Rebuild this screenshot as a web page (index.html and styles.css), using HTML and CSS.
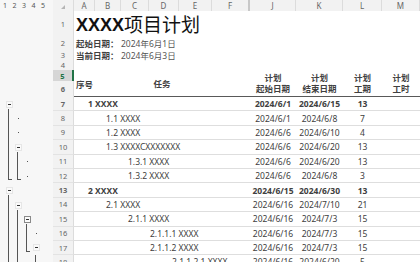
FILE: index.html
```html
<!DOCTYPE html>
<html lang="zh-CN">
<head>
    <meta charset="UTF-8">
    <title>XXXX项目计划</title>
    <link rel="stylesheet" href="styles.css">
</head>
<body>
    <div class="sheet">
        <!-- column letters -->
        <div class="row colhead">
            <div class="levels"><span>1</span><span>2</span><span>3</span><span>4</span><span>5</span></div>
            <div class="corner"><i class="tri"></i></div>
            <div>A</div><div>B</div><div>C</div><div>D</div><div>E</div>
            <div class="hidden-mark">F</div><div>J</div><div>K</div><div>L</div><div>M</div>
        </div>

        <div class="row r1">
            <div class="outline"></div>
            <div class="rh">1</div>
            <div class="title"><b>XXXX</b>项目计划</div>
        </div>
        <div class="row r2">
            <div class="outline"></div>
            <div class="rh">2</div>
            <div class="label">起始日期：</div>
            <div class="value">2024年6月1日</div>
        </div>
        <div class="row r3">
            <div class="outline"></div>
            <div class="rh">3</div>
            <div class="label">当前日期：</div>
            <div class="value">2024年6月3日</div>
        </div>
        <div class="row r4">
            <div class="outline"></div>
            <div class="rh">4</div>
        </div>

        <!-- rows 5-6: merged header -->
        <div class="row head">
            <div class="outline"></div>
            <div class="rh two"><span class="sel">5</span><span>6</span></div>
            <div class="h-task">任务</div>
            <div class="h-no">序号</div>
            <div class="h hj">计划<br>起始日期</div>
            <div class="h hk">计划<br>结束日期</div>
            <div class="h hl">计划<br>工期</div>
            <div class="h hm">计划<br>工时</div>
        </div>

        <div class="row data bold">
            <div class="outline"><span class="s start"><i class="btn"></i><i class="ln"></i></span></div>
            <div class="rh">7</div>
            <div class="task lv1">1 XXXX</div>
            <div class="c">2024/6/1</div><div class="c">2024/6/15</div><div class="c">13</div><div class="c"></div>
        </div>
        <div class="row data">
            <div class="outline"><span class="s"><i class="ln"></i></span><span class="s"><i class="dot"></i></span></div>
            <div class="rh">8</div>
            <div class="task lv2">1.1 XXXX</div>
            <div class="c">2024/6/1</div><div class="c">2024/6/8</div><div class="c">7</div><div class="c"></div>
        </div>
        <div class="row data">
            <div class="outline"><span class="s"><i class="ln"></i></span><span class="s"><i class="dot"></i></span></div>
            <div class="rh">9</div>
            <div class="task lv2">1.2 XXXX</div>
            <div class="c">2024/6/6</div><div class="c">2024/6/10</div><div class="c">4</div><div class="c"></div>
        </div>
        <div class="row data">
            <div class="outline"><span class="s"><i class="ln"></i></span><span class="s start"><i class="btn"></i><i class="ln"></i></span></div>
            <div class="rh">10</div>
            <div class="task lv2">1.3 XXXXCXXXXXXX</div>
            <div class="c">2024/6/6</div><div class="c">2024/6/20</div><div class="c">13</div><div class="c"></div>
        </div>
        <div class="row data">
            <div class="outline"><span class="s"><i class="ln"></i></span><span class="s"><i class="ln"></i></span><span class="s"><i class="dot"></i></span></div>
            <div class="rh">11</div>
            <div class="task lv3">1.3.1 XXXX</div>
            <div class="c">2024/6/6</div><div class="c">2024/6/20</div><div class="c">13</div><div class="c"></div>
        </div>
        <div class="row data">
            <div class="outline"><span class="s"><i class="ln end"></i></span><span class="s"><i class="ln end"></i></span><span class="s"><i class="dot"></i></span></div>
            <div class="rh">12</div>
            <div class="task lv3">1.3.2 XXXX</div>
            <div class="c">2024/6/6</div><div class="c">2024/6/8</div><div class="c">3</div><div class="c"></div>
        </div>
        <div class="row data bold">
            <div class="outline"><span class="s start"><i class="btn"></i><i class="ln"></i></span></div>
            <div class="rh">13</div>
            <div class="task lv1">2 XXXX</div>
            <div class="c">2024/6/15</div><div class="c">2024/6/30</div><div class="c">13</div><div class="c"></div>
        </div>
        <div class="row data">
            <div class="outline"><span class="s"><i class="ln"></i></span><span class="s start"><i class="btn"></i><i class="ln"></i></span></div>
            <div class="rh">14</div>
            <div class="task lv2">2.1 XXXX</div>
            <div class="c">2024/6/16</div><div class="c">2024/7/10</div><div class="c">21</div><div class="c"></div>
        </div>
        <div class="row data">
            <div class="outline"><span class="s"><i class="ln"></i></span><span class="s"><i class="ln"></i></span><span class="s start"><i class="btn active"></i><i class="ln"></i></span></div>
            <div class="rh">15</div>
            <div class="task lv3">2.1.1 XXXX</div>
            <div class="c">2024/6/16</div><div class="c">2024/7/3</div><div class="c">15</div><div class="c"></div>
        </div>
        <div class="row data">
            <div class="outline"><span class="s"><i class="ln"></i></span><span class="s"><i class="ln"></i></span><span class="s"><i class="ln"></i></span><span class="s"><i class="dot"></i></span></div>
            <div class="rh">16</div>
            <div class="task lv4">2.1.1.1 XXXX</div>
            <div class="c">2024/6/16</div><div class="c">2024/7/3</div><div class="c">15</div><div class="c"></div>
        </div>
        <div class="row data">
            <div class="outline"><span class="s"><i class="ln"></i></span><span class="s"><i class="ln"></i></span><span class="s"><i class="ln end"></i></span><span class="s"><i class="btn"></i></span></div>
            <div class="rh">17</div>
            <div class="task lv4">2.1.1.2 XXXX</div>
            <div class="c">2024/6/16</div><div class="c">2024/7/3</div><div class="c">15</div><div class="c"></div>
        </div>
        <div class="row data">
            <div class="outline"><span class="s"><i class="ln"></i></span><span class="s"><i class="ln"></i></span><span class="s"></span><span class="s"><i class="ln"></i></span></div>
            <div class="rh">18</div>
            <div class="task lv5">2.1.1.2.1 XXXX</div>
            <div class="c">2024/6/16</div><div class="c">2024/6/20</div><div class="c">5</div><div class="c"></div>
        </div>
    </div>
</body>
</html>
```

FILE: styles.css
```css
body {
    margin: 0;
    background-color: #fff;
    font-family: "Noto Sans", "Noto Sans CJK SC", sans-serif;
    color: #404040;
}
.sheet {
    width: 420px;
    height: 262px;
    overflow: hidden;
}
.row {
    display: grid;
    grid-template-columns: 53px 21px 21px 26px 28px 30px 33px 38px 46px 47px 39px 38px;
}
.row > div {
    display: flex;
    align-items: center;
    white-space: nowrap;
    min-width: 0;
}

/* column letters */
.colhead {
    height: 11px;
    font-size: 8px;
    line-height: 11px;
    color: #666;
    background-color: #f2f2f2;
}
.colhead > div {
    justify-content: center;
    border-right: 1px solid #dcdcdc;
}
.colhead .levels {
    justify-content: flex-start;
    padding-left: 3px;
    gap: 5.5px;
    font-size: 7px;
    color: #555;
    background-color: #f7f7f7;
    border-right: none;
}
.colhead .corner {
    justify-content: center;
}
.tri {
    width: 0;
    height: 0;
    border-left: 4px solid transparent;
    border-bottom: 4px solid #b5b5b5;
    margin-top: 2px;
}
.colhead .hidden-mark {
    border-right: 2px solid #c8c8c8;
}

/* row numbers and outline strip */
.outline {
    background-color: #f7f7f7;
    padding-left: 5px;
}
.row > .outline {
    align-items: stretch;
}
.rh {
    justify-content: center;
    font-size: 7.5px;
    color: #666;
    background-color: #f2f2f2;
    border-right: 1px solid #dcdcdc;
}
.rh.two {
    flex-direction: column;
    align-items: stretch;
    border-right: none;
}
.rh.two span {
    display: flex;
    align-items: center;
    justify-content: center;
    border-right: 1px solid #dcdcdc;
}
.rh.two span:first-child {
    height: 11px;
}
.rh.two span:last-child {
    flex: 1;
}
.rh .sel {
    background-color: #d6d6d6;
    color: #217346;
    border-right: 2px solid #217346 !important;
}

.s {
    width: 9px;
    display: flex;
    flex-direction: column;
    align-items: flex-start;
    justify-content: center;
}
.s.start {
    justify-content: flex-start;
}
.ln {
    display: block;
    flex: 1;
    width: 0;
    margin-left: 3px;
    border-left: 1px solid #555;
    align-self: flex-start;
}
.s > .ln {
    height: 100%;
}
.ln.end {
    width: 3px;
    margin-bottom: 3px;
    border-bottom: 1px solid #555;
}
.btn {
    display: flex;
    align-items: center;
    justify-content: center;
    width: 7px;
    height: 7px;
    margin: 4px 0 1px 1px;
    box-sizing: border-box;
    background-color: #fafafa;
    border: 1px solid #e6e6e6;
    flex: none;
}
.s > .btn:only-child {
    margin-top: 0;
}
.btn::before {
    content: "";
    width: 3px;
    height: 1px;
    background-color: #333;
}
.btn.active {
    border-color: #8a8a8a;
}
.dot {
    width: 1px;
    height: 1px;
    margin-left: 4px;
    background-color: #555;
}

/* rows 1 to 4 */
.r1 {
    height: 26px;
}
.title {
    grid-column: 3 / -1;
    padding-left: 2px;
    padding-top: 1px;
    font-size: 19px;
    line-height: 20px;
    color: #111;
}
.title b {
    font-family: "Liberation Sans", sans-serif;
    font-size: 18px;
}
.r2 {
    height: 12px;
}
.r3 {
    height: 11px;
}
.r4 {
    height: 10px;
}
.label {
    grid-column: 3 / 5;
    padding-left: 2px;
    font-size: 8.5px;
    font-weight: bold;
    color: #404040;
}
.value {
    grid-column: 5 / -1;
    font-size: 8.5px;
    color: #555;
}

/* header rows 5-6 */
.head {
    height: 27px;
    font-size: 8.5px;
    font-weight: bold;
    color: #404040;
}
.head > div {
    grid-row: 1;
}
.head .outline { grid-column: 1; }
.head .rh { grid-column: 2; }
.h-task {
    grid-column: 3 / 9;
    justify-content: center;
    border-bottom: 1.5px solid #595959;
}
.h-no {
    grid-column: 3 / 4;
    padding-left: 2px;
}
.head .h {
    justify-content: center;
    text-align: center;
    line-height: 11px;
    border-bottom: 1.5px solid #595959;
}
.hj { grid-column: 9; }
.hk { grid-column: 10; }
.hl { grid-column: 11; }
.hm { grid-column: 12; }

/* data rows */
.data {
    height: 14.4px;
    font-size: 8.5px;
}
.data .rh {
    border-bottom: 1px solid #e3e3e3;
}
.task, .c {
    border-bottom: 1px solid #dedede;
}
.task {
    grid-column: 3 / 9;
}
.c {
    justify-content: center;
}
.bold {
    font-weight: bold;
}
.lv1 { padding-left: 14px; }
.lv2 { padding-left: 32px; }
.lv3 { padding-left: 54px; }
.lv4 { padding-left: 76px; }
.lv5 { padding-left: 98px; }
```
